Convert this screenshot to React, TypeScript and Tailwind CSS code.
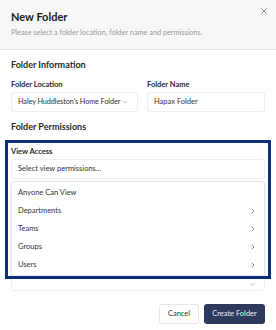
import React from 'react';
import { X, ChevronDown, ChevronRight } from 'lucide-react';

const menuItems = [
  { label: 'Anyone Can View', sub: false },
  { label: 'Departments', sub: true },
  { label: 'Teams', sub: true },
  { label: 'Groups', sub: true },
  { label: 'Users', sub: true },
];

export default function App() {
  return (
    <div className="w-[276px] h-[330px] bg-white overflow-hidden text-[#222] font-['Lato',sans-serif]">
      {/* header */}
      <div className="relative h-[50px] bg-[#f7f7f7] border-b border-[#e6e6e6] px-[11px] pt-[9px]">
        <h1 className="text-[11px] font-bold leading-[16px] text-[#1a1a1a]">New Folder</h1>
        <p className="mt-[3px] text-[7.3px] leading-[10px] text-[#9a9a9a]">
          Please select a folder location, folder name and permissions.
        </p>
        <button className="absolute right-[7px] top-[6px] text-[#555]">
          <X className="w-[10px] h-[10px]" strokeWidth={1.6} />
        </button>
      </div>

      <div className="px-[11px] pt-[9px]">
        <h2 className="text-[9px] font-bold leading-[12px] text-[#2a2a2a]">Folder Information</h2>

        <div className="mt-[9px] grid grid-cols-[127px_1fr] gap-[9px]">
          <div>
            <label className="block text-[7.5px] font-bold leading-[10px] text-[#2a2a2a]">Folder Location</label>
            <div className="mt-[2px] h-[20px] rounded-[3px] border border-[#eeeeee] bg-white flex items-center pl-[6px] pr-[2px] text-[7.3px] text-[#333] tracking-[-0.1px] whitespace-nowrap">
              <span>Haley Huddleston's Home Folder</span>
              <ChevronDown className="ml-[2px] w-[6px] h-[6px] shrink-0" strokeWidth={1.5} />
            </div>
          </div>
          <div>
            <label className="block text-[7.5px] font-bold leading-[10px] text-[#2a2a2a]">Folder Name</label>
            <div className="mt-[2px] h-[20px] rounded-[3px] border border-[#eeeeee] bg-white flex items-center px-[6px] text-[7.5px] text-[#333]">
              Hapax Folder
            </div>
          </div>
        </div>

        <h2 className="mt-[9px] text-[9px] font-bold leading-[12px] text-[#2a2a2a]">Folder Permissions</h2>

        <div className="relative mt-[14px]">
          <label className="block text-[7.5px] font-bold leading-[10px] text-[#2a2a2a]">View Access</label>
          <div className="mt-[2px] h-[20px] rounded-[3px] border border-[#eeeeee] bg-white flex items-center px-[6px] text-[7.5px] text-[#333]">
            Select view permissions...
          </div>

          {/* second permission select, mostly covered by the open menu */}
          <div className="mt-[92px] h-[20px] rounded-[3px] border border-[#eeeeee] bg-white flex items-center justify-end pr-[8px] pt-[6px] text-[#666]">
            <ChevronDown className="w-[7px] h-[7px]" strokeWidth={1.5} />
          </div>

          {/* dropdown */}
          <div className="absolute left-0 right-0 top-[34px] h-[95px] rounded-[3px] border border-[#e8e8e8] bg-white shadow-[0_1px_3px_rgba(0,0,0,0.12)] pt-[2px] z-10">
            {menuItems.map((m) => (
              <div key={m.label} className="h-[18px] flex items-center justify-between pl-[6px] pr-[7px] text-[7.5px] text-[#333]">
                <span>{m.label}</span>
                {m.sub && <ChevronRight className="w-[8px] h-[8px] text-[#333]" strokeWidth={1.7} />}
              </div>
            ))}
          </div>

          {/* highlight box */}
          <div className="absolute left-[-6px] right-[-6px] top-[-7px] h-[139px] border-[3px] border-[#0a2d7c] z-20 pointer-events-none" />
        </div>

        <div className="mt-[13px] flex justify-end gap-[5px]">
          <button className="h-[20px] w-[40px] rounded-[3px] border border-[#e6e6e6] bg-white text-[7.5px] text-[#333]">Cancel</button>
          <button className="h-[20px] w-[61px] rounded-[3px] bg-[#2d3a5e] text-[7.5px] text-[#eef0f5]">Create Folder</button>
        </div>
      </div>
    </div>
  );
}
